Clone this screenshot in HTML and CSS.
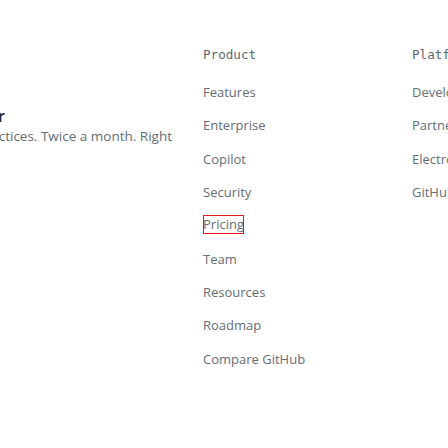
FILE: index.html
```html
<!DOCTYPE html>
<html lang="en">
<head>
<meta charset="utf-8">
<title>Footer</title>
<link rel="stylesheet" href="styles.css">
</head>
<body>
<footer class="footer">
  <section class="newsletter">
    <h2 class="newsletter-title">Subscribe to our developer newsletter</h2>
    <p class="newsletter-text">Get tips, technical guides, and best practices. Twice a month. Right</p>
  </section>
  <nav class="col">
    <h3 class="col-title">Product</h3>
    <ul class="links">
      <li><a href="#">Features</a></li>
      <li><a href="#">Enterprise</a></li>
      <li><a href="#">Copilot</a></li>
      <li><a href="#">Security</a></li>
      <li><a href="#" class="focused">Pricing</a></li>
      <li><a href="#">Team</a></li>
      <li><a href="#">Resources</a></li>
      <li><a href="#">Roadmap</a></li>
      <li><a href="#">Compare GitHub</a></li>
    </ul>
  </nav>
  <nav class="col">
    <h3 class="col-title">Platform</h3>
    <ul class="links">
      <li><a href="#">Developer API</a></li>
      <li><a href="#">Partners</a></li>
      <li><a href="#">Electron</a></li>
      <li><a href="#">GitHub Desktop</a></li>
    </ul>
  </nav>
</footer>
</body>
</html>
```
FILE: styles.css
```css
html, body {
  margin: 0;
  padding: 0;
  background: #ffffff;
  overflow: hidden;
}
body {
  width: 448px;
  height: 448px;
  font-family: "Open Sans", "Noto Sans", sans-serif;
}
.footer {
  display: flex;
  align-items: flex-start;
  padding-top: 45px;
  margin-left: -308px;
  width: 1200px;
}
.newsletter {
  width: 480px;
  flex: none;
  margin: 61px 31px 0 0;
  display: flex;
  flex-direction: column;
  align-items: flex-end;
  white-space: nowrap;
}
.newsletter-title {
  margin: 0 167px 0 0;
  font-size: 16px;
  font-weight: 600;
  line-height: 20px;
  color: #1f2328;
}
.newsletter-text {
  margin: 0;
  font-size: 13.5px;
  line-height: 20px;
  color: #656d76;
}
.col {
  width: 209px;
  flex: none;
  white-space: nowrap;
}
.col-title {
  margin: 0 0 17px;
  font-family: "DejaVu Sans Mono", monospace;
  font-size: 12.6px;
  font-weight: 400;
  line-height: 20px;
  color: #5f6770;
}
.links {
  list-style: none;
  margin: 0;
  padding: 0;
  display: flex;
  flex-direction: column;
  gap: 13.33px;
}
.links li {
  line-height: 20px;
  font-size: 13px;
}
.links a {
  color: #656d76;
  text-decoration: none;
}
.links a.focused {
  display: inline-block;
  line-height: 19px;
  vertical-align: top;
  outline: 1px solid #e5161b;
  outline-offset: -1px;
}
```
